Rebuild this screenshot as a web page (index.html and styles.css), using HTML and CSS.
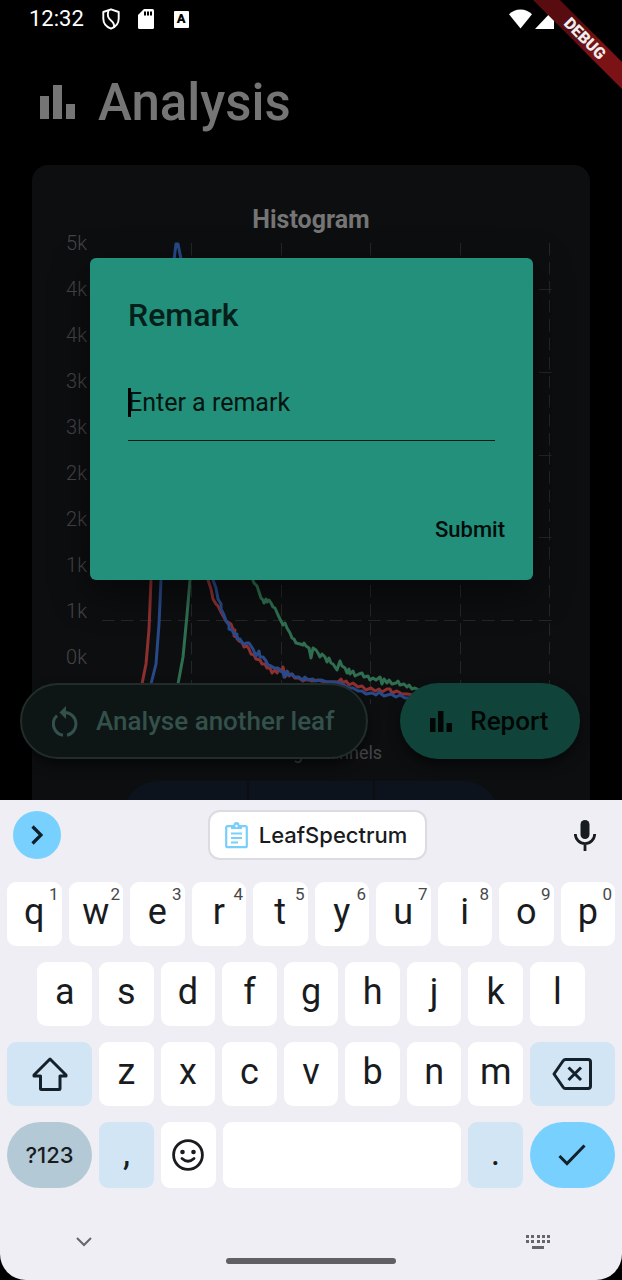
FILE: index.html
```html
<!DOCTYPE html>
<html lang="en">
<head>
<meta charset="utf-8">
<meta name="viewport" content="width=device-width, initial-scale=1">
<title>Analysis</title>
<link rel="stylesheet" href="styles.css">
</head>
<body>
<div class="screen">
  <div class="app">
    <div class="status">
      <span class="clock">12:32</span>
      <svg class="status-shield" width="18" height="22" viewBox="0 0 18 22" fill="none" stroke="#fff" stroke-width="1.900" stroke-linejoin="round"><path d="M9 1.300 16.700 4v6.500C16.700 15.500 13.500 19 9 20.700 4.500 19 1.300 15.500 1.300 10.500V4Z"/><path d="M6.500 2.300C5 8 6 10 9 12.500s3.500 4 3 6.500"/></svg>
      <svg class="status-sd" width="16" height="20" viewBox="0 0 16 20"><path d="M6 0h8.500Q16 0 16 1.500v17q0 1.500-1.500 1.500h-13Q0 20 0 18.500V6Z" fill="#fff"/><path d="M6 2.500h2v4H6zM9 2.500h2v4H9zM12 2.500h2v4h-2z" fill="#000"/></svg>
      <span class="status-a">A</span>
      <svg class="status-wifi" width="23" height="20" viewBox="0 0 24 20"><path d="M12 20 0 5Q5 0 12 0t12 5Z" fill="#fff"/></svg>
      <svg class="status-signal" width="19" height="20" viewBox="0 0 19 20"><path d="M19 0v20H0Z" fill="#fff"/></svg>
    </div>
    <div class="debug-corner"><span class="debug">DEBUG</span></div>

    <header class="header">
      <svg width="35" height="34" viewBox="0 0 35 34" fill="#757575"><path d="M0 11h9v23H0zM13 0h9v34h-9zM26 19h9v15h-9z"/></svg>
      <h1>Analysis</h1>
    </header>

    <main class="card">
      <h2>Histogram</h2>
      <div class="chart">
        <div class="labels"><span>5k</span><span>4k</span><span>4k</span><span>3k</span><span>3k</span><span>2k</span><span>2k</span><span>1k</span><span>1k</span><span>0k</span></div>
        <svg class="plot" viewBox="102 233 456 480" fill="none">
          <g stroke="#242628" stroke-width="1" stroke-dasharray="12.500 6.500">
            <path d="M191.500 243v461M281.500 243v461M370.500 243v461M460.500 243v461M549.500 243v461"/>
            <path d="M102 289.500h456M102 372.500h456M102 455.500h456M102 537.500h456M102 620.500h456"/>
          </g>
          <g stroke-width="3" stroke-linejoin="round">
            <path stroke="#2f6e50" d="M178 684 183 657 187 615 190 580 198 420 210 320 220 380 236 520 252 578 254 583 257 586 259 592 261 598 263 600 264 603 266 599 267 602 269 600 271 603 273 607 275 608 278 615 281 621 283 625 285 623 287 628 290 633 292 638 294 639 296 643 300 644 303 645 304 643 306 646 309 648 311 658 313 648 316 650 318 653 320 657 322 654 325 657 327 662 329 658 331 663 333 664 335 667 337 670 339 664 340 661 342 666 345 668 347 673 349 669 350 674 353 671 355 676 359 674 362 673 364 677 368 676 370 680 373 678 376 680 380 677 382 684 384 679 387 683 389 680 392 684 396 683 398 681 400 685 404 684 407 687 409 685 412 689 415 688 419 690"/>
            <path stroke="#8c3030" d="M142 684 146 664 149 629 151 580 156 400 164 320 176 380 191 500 208 580 211 589 213 599 216 604 218 606 221 612 226 621 231 624 233 629 235 630 234 636 237 637 239 641 242 642 244 647 247 646 249 649 251 654 254 655 256 659 260 660 262 664 265 664 267 668 270 668 272 673 275 670 277 673 279 669 282 671 283 667 285 677 288 672 289 676 292 674 295 678 299 678 303 681 307 679 312 681 318 680 325 682 332 682 338 682 341 679 343 683 346 681 349 685 353 683 358 687 362 686 366 690 371 688 375 691 379 689 382 692 387 689 390 689 392 693 397 691 402 694 407 694 413 695"/>
            <path stroke="#284a8a" d="M151 684 156 664 159 624 161 580 166 380 174 260 176 244 178 244 181 259 186 380 200 510 213 580 216 588 218 599 221 604 221 609 224 615 226 621 229 625 229 629 232 630 234 634 237 634 237 639 240 639 242 643 244 644 247 643 249 643 251 646 253 649 256 656 259 651 260 657 263 657 266 661 268 665 271 666 274 668 278 668 280 671 283 672 284 677 287 671 288 675 292 674 294 677 299 677 302 680 305 677 307 680 313 679 315 681 321 680 327 682 334 682 339 683 344 685 348 688 353 688 358 691 362 691 366 694 372 693 376 695 379 692 384 696 391 694 396 697 400 695 405 698 413 698"/>
          </g>
        </svg>
      </div>
      <p class="caption">Viewing Channels</p>
      <div class="segments"><button type="button" aria-label="Red channel"></button><button type="button" aria-label="Green channel"></button><button type="button" aria-label="Blue channel"></button></div>
    </main>

    <div class="actions">
      <button type="button" class="fab fab-outline">
        <svg width="26" height="31" viewBox="0 0 26 31" fill="none" stroke="#34504b" stroke-width="3"><path d="M11 29.200A11.500 11.500 0 0 1 5 9.500M15 29.200A11.500 11.500 0 0 0 13 6.500"/><path d="M14 0v13L7.500 6.500Z" fill="#34504b" stroke="none"/></svg>
        Analyse another leaf
      </button>
      <button type="button" class="fab fab-solid">
        <svg width="22" height="21" viewBox="0 0 22 21" fill="#020706"><path d="M0 7h5.500v14H0zM8 0h5.500v21H8zM16.500 12H22v9h-5.500z"/></svg>
        Report
      </button>
    </div>

    <div class="overlay">
      <form class="dialog" role="dialog" aria-labelledby="dialog-title">
        <label class="dialog-title" id="dialog-title" for="remark">Remark</label>
        <div class="field"><input id="remark" type="text" placeholder="Enter a remark"><span class="caret"></span></div>
        <button type="button" class="submit">Submit</button>
      </form>
    </div>
  </div>

  <section class="keyboard" aria-label="Keyboard">
    <div class="strip">
      <button type="button" class="expand" aria-label="Expand"><svg width="12" height="20" viewBox="0 0 12 20" fill="none" stroke="#10202a" stroke-width="3.200"><path d="M1.500 1.500 10 10l-8.500 8.500"/></svg></button>
      <button type="button" class="chip">
        <svg width="23" height="27" viewBox="0 0 23 27" fill="none" stroke="#79cffc" stroke-width="2.200"><rect x="1.200" y="4.200" width="20.600" height="21" rx="1.500"/><path d="M6 11.500h11M6 16h11M6 20.500h7"/><path d="M6 7V3h2.500a3 3 0 0 1 6 0H17v4Z" fill="#79cffc" stroke="none"/><circle cx="11.500" cy="4" r="1.200" fill="#fff" stroke="none"/></svg>
        LeafSpectrum
      </button>
      <button type="button" class="mic" aria-label="Voice input"><svg width="22" height="31" viewBox="0 0 22 31"><rect x="6.500" y="0" width="9" height="19" rx="4.500" fill="#191c1f"/><path d="M1.300 14a9.700 9.700 0 0 0 19.400 0M11 24v7" fill="none" stroke="#191c1f" stroke-width="2.800"/></svg></button>
    </div>
    <div class="keys">
      <div class="row">
        <button type="button" class="key">q<sup>1</sup></button><button type="button" class="key">w<sup>2</sup></button><button type="button" class="key">e<sup>3</sup></button><button type="button" class="key">r<sup>4</sup></button><button type="button" class="key">t<sup>5</sup></button><button type="button" class="key">y<sup>6</sup></button><button type="button" class="key">u<sup>7</sup></button><button type="button" class="key">i<sup>8</sup></button><button type="button" class="key">o<sup>9</sup></button><button type="button" class="key">p<sup>0</sup></button>
      </div>
      <div class="row row-inset">
        <button type="button" class="key">a</button><button type="button" class="key">s</button><button type="button" class="key">d</button><button type="button" class="key">f</button><button type="button" class="key">g</button><button type="button" class="key">h</button><button type="button" class="key">j</button><button type="button" class="key">k</button><button type="button" class="key">l</button>
      </div>
      <div class="row">
        <button type="button" class="key wide tint" aria-label="Shift"><svg width="36" height="34" viewBox="0 0 36 34" fill="none" stroke="#14202a" stroke-width="3" stroke-linejoin="round"><path d="M18 2 34 18v1h-6v12.500q0 1-1 1H9.500q-1 0-1-1V19H2v-1Z"/></svg></button>
        <button type="button" class="key">z</button><button type="button" class="key">x</button><button type="button" class="key">c</button><button type="button" class="key">v</button><button type="button" class="key">b</button><button type="button" class="key">n</button><button type="button" class="key">m</button>
        <button type="button" class="key wide tint" aria-label="Backspace"><svg width="40" height="32" viewBox="0 0 40 32" fill="none" stroke="#14202a" stroke-width="3" stroke-linejoin="round"><path d="M2 16 11 3q1-1.500 2.500-1.500H36q2.500 0 2.500 2.500v24q0 2.500-2.500 2.500H13.500q-1.500 0-2.500-1.500ZM16.500 9.500l12.500 12.500M29 9.500 16.500 22"/></svg></button>
      </div>
      <div class="row row-last">
        <button type="button" class="key wide mode">?123</button>
        <button type="button" class="key small tint">,</button>
        <button type="button" class="key small" aria-label="Emoji"><svg width="32" height="32" viewBox="0 0 32 32" fill="none" stroke="#191c1f" stroke-width="2.800"><circle cx="16" cy="16" r="14.400"/><path d="M10 19.500q6 5.500 12 0" stroke-linecap="round"/><circle cx="10.500" cy="13" r="2.300" fill="#191c1f" stroke="none"/><circle cx="21.500" cy="13" r="2.300" fill="#191c1f" stroke="none"/></svg></button>
        <button type="button" class="key" aria-label="Space"></button>
        <button type="button" class="key small tint">.</button>
        <button type="button" class="key wide enter" aria-label="Done"><svg width="28" height="22" viewBox="0 0 28 22" fill="none" stroke="#14202a" stroke-width="3"><path d="M1.500 12 9 19.500 26.500 1.500"/></svg></button>
      </div>
    </div>
    <div class="nav">
      <button type="button" aria-label="Hide keyboard"><svg width="16" height="10" viewBox="0 0 16 10" fill="none" stroke="#66666a" stroke-width="2"><path d="M1 1l7 7 7-7"/></svg></button>
      <button type="button" aria-label="Switch keyboard"><svg width="25" height="14" viewBox="0 0 25 14" fill="#66666a"><path d="M0 0h3v3H0zM5 0h3v3H5zM11 0h3v3h-3zM16 0h3v3h-3zM21 0h3v3h-3zM0 5h3v3H0zM5 5h3v3H5zM11 5h3v3h-3zM16 5h3v3h-3zM21 5h3v3h-3zM6 11h12v3H6z"/></svg></button>
    </div>
    <div class="handle"></div>
  </section>
</div>
</body>
</html>
```
FILE: styles.css
```css
* { box-sizing: border-box; }
body { margin: 0; background: #000; font-family: Roboto, "Liberation Sans", sans-serif; }
button, input { font: inherit; color: inherit; border: 0; padding: 0; background: none; }
h1, h2, p { margin: 0; }
svg { display: block; flex: none; }

.screen { height: 100vh; display: flex; flex-direction: column; background: #000; overflow: hidden; }
.app { position: relative; flex: 1; min-height: 0; overflow: hidden; }

.status { height: 38px; padding: 0 68px 0 29px; display: flex; align-items: center; color: #fff; }
.clock { font-size: 22px; line-height: 40px; }
.status-shield { margin-left: 18px; }
.status-sd { margin-left: 18px; }
.status-a { margin-left: 20px; width: 15px; height: 17px; border-radius: 1px; background: #fff; color: #000; font-size: 13px; font-weight: 900; line-height: 16px; text-align: center; }
.status-wifi { margin-left: auto; }
.status-signal { margin-left: 3px; }

.debug-corner { position: absolute; top: 0; right: 0; width: 89px; height: 89px; overflow: hidden; }
.debug { position: absolute; left: -18px; top: 29px; width: 140px; height: 19px; background: linear-gradient(90deg, #580c0f 40%, #7b1316 60%); color: #eee; font-size: 16px; font-weight: 900; line-height: 19px; text-align: center; transform: rotate(45deg); }

.header { height: 127px; padding: 2px 40px 0; display: flex; align-items: center; gap: 23px; color: #757575; }
.header svg { margin-bottom: 2px; }
.header h1 { font-size: 51px; font-weight: 500; line-height: 60px; }

.card { margin: 0 32px; padding: 42px 32px 60px 28px; border-radius: 16px; background: #0d0e10; color: #757575; }
.card h2 { margin-right: -4px; font-size: 25px; font-weight: 700; line-height: 26px; text-align: center; }
.chart { display: flex; gap: 15px; }
.labels { width: 27px; display: flex; flex-direction: column; gap: 26px; color: #444547; font-size: 20px; font-weight: 300; line-height: 20px; text-align: right; }
.plot { flex: 1; min-width: 0; }
.caption { margin-top: 30px; margin-right: -4px; color: #454648; font-size: 18px; line-height: 20px; text-align: center; }
.segments { height: 70px; margin: 18px 59px 0 63px; display: flex; gap: 2px; border-radius: 35px; overflow: hidden; }
.segments button { flex: 1; background: #0d131d; }

.actions { position: absolute; left: 20px; right: 20px; bottom: 41px; display: flex; gap: 32px; }
.fab { height: 76px; padding: 0 32px 0 30px; border-radius: 38px; display: flex; align-items: center; gap: 18px; font-size: 26px; font-weight: 500; white-space: nowrap; box-shadow: 0 6px 12px rgba(0, 0, 0, .5); }
.fab-outline { border: 2px solid #222d2b; background: #0e1615; color: #34504b; }
.fab-solid { background: #10443a; color: #020706; }

.overlay { position: absolute; inset: 0; padding: 38px 89px 0 90px; display: flex; align-items: center; }
.dialog { flex: 1; padding: 36px 28px 26px 38px; display: flex; flex-direction: column; border-radius: 6px; background: #23907c; box-shadow: 0 12px 36px rgba(0, 0, 0, .5); }
.dialog-title { font-size: 32px; font-weight: 500; line-height: 42px; color: #03201a; }
.field { position: relative; margin: 28px 10px 0 0; border-bottom: 1px solid #051814; }
.field input { display: block; width: 100%; height: 76px; font-size: 25px; outline: 0; }
.field input::placeholder { color: #04150f; opacity: 1; }
.caret { position: absolute; left: 0; top: 24px; width: 3px; height: 29px; background: #000; }
.submit { align-self: flex-end; margin-top: 65px; font-size: 22px; font-weight: 500; line-height: 48px; color: #020c0a; }

.keyboard { padding: 0 7px; background: #efeef4; border-radius: 0 0 26px 26px; color: #191c1f; }
.strip { height: 70px; padding: 0 19px 0 6px; display: flex; justify-content: space-between; align-items: center; }
.expand { width: 48px; height: 48px; border-radius: 24px; display: grid; place-items: center; background: #78d0fe; }
.chip { height: 50px; padding: 0 18px 0 15px; display: flex; align-items: center; gap: 11px; border: 2px solid #dcdbe1; border-radius: 12px; background: #fff; font-family: Inter, sans-serif; font-size: 22px; font-weight: 500; }
.keys { margin-top: 12px; display: flex; flex-direction: column; gap: 16px; }
.row { display: flex; gap: 7px; }
.row-inset { padding: 0 5%; }
.key { position: relative; flex: 1; height: 64px; padding-bottom: 4px; border-radius: 9px; background: #fff; font-size: 36px; line-height: 60px; text-align: center; display: flex; align-items: center; justify-content: center; }
.key sup { position: absolute; top: 3px; right: 3px; color: #46484b; font-size: 17px; line-height: 18px; }
.key svg { margin-top: 4px; }
.wide { flex: 0 0 14%; }
.small { flex: 0 0 9%; }
.tint { background: #d2e5f4; }
.row-last .key { height: 66px; }
.row-last .wide { border-radius: 33px; }
.row-last .mode { background: #b4c9d6; font-family: Inter, sans-serif; font-size: 22px; font-weight: 500; padding: 0; }
.row-last .enter { background: #78d0fe; }
.nav { height: 70px; padding: 38px 64px 0 69px; display: flex; justify-content: space-between; align-items: center; }
.handle { width: 28%; height: 6px; margin: 0 auto 16px; border-radius: 3px; background: #606064; }
```
